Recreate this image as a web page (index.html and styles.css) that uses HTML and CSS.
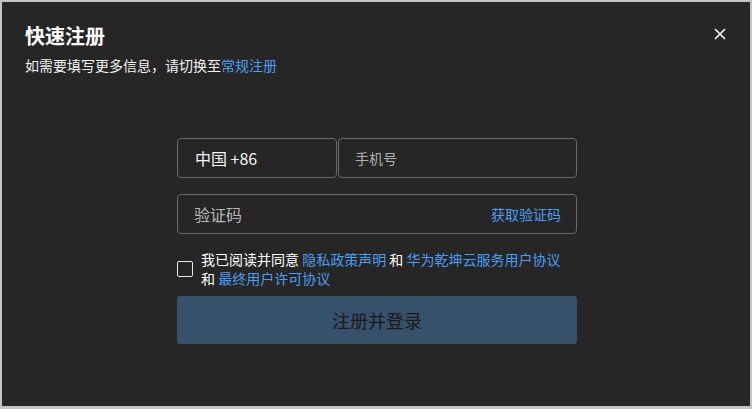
FILE: index.html
```html
<!DOCTYPE html>
<html lang="zh-CN">
<head>
    <meta charset="UTF-8">
    <meta name="viewport" content="width=device-width, initial-scale=1.0">
    <title>快速注册</title>
    <link rel="stylesheet" href="styles.css">
</head>
<body>
<div class="dialog">
    <div class="head">
        <div class="title">快速注册</div>
        <div class="sub">如需要填写更多信息，请切换至<a class="link">常规注册</a></div>
        <span class="close">
            <svg width="12" height="12" viewBox="0 0 12 12"><path d="M1 1L11 11M11 1L1 11" stroke="#fff" stroke-width="1.6" fill="none"/></svg>
        </span>
    </div>

    <div class="form">
        <div class="row">
            <div class="box country">中国 +86</div>
            <div class="box phone">手机号</div>
        </div>
        <div class="box code">
            <span class="hint">验证码</span>
            <a class="link getcode">获取验证码</a>
        </div>
        <div class="agree">
            <span class="check"></span>
            <p>我已阅读并同意 <a class="link">隐私政策声明</a> 和 <a class="link">华为乾坤云服务用户协议</a><br>和 <a class="link">最终用户许可协议</a></p>
        </div>
        <div class="btn">注册并登录</div>
    </div>
</div>
</body>
</html>
```

FILE: styles.css
```css
* {
    margin: 0;
    padding: 0;
    box-sizing: border-box;
}
body {
    width: 752px;
    height: 409px;
    background: #c3c3c3;
    padding: 2px 2px 3px 2px;
    font-family: "Noto Sans CJK SC", "Noto Sans", sans-serif;
}
.dialog {
    height: 100%;
    background: #262626;
    color: #fff;
    padding-left: 2px;
}
.head {
    position: relative;
    padding: 20px 23px 0 21px;
}
.title {
    font-size: 20px;
    font-weight: bold;
    line-height: 28px;
}
.sub {
    margin-top: 5px;
    font-size: 14px;
    line-height: 20px;
    color: #f2f2f2;
}
.link {
    color: #4d9cf0;
}
.close {
    position: absolute;
    right: 24px;
    top: 26px;
    display: flex;
}
.form {
    width: 400px;
    margin: 63px auto 0;
    display: flex;
    flex-direction: column;
}
.row {
    display: flex;
    gap: 1px;
}
.box {
    height: 40px;
    border: 1px solid #6a6a6a;
    border-radius: 4px;
    display: flex;
    align-items: center;
}
.country {
    width: 160px;
    padding-left: 17px;
    font-size: 16px;
    color: #f5f5f5;
}
.phone {
    flex: 1;
    padding-left: 16px;
    font-size: 14px;
    color: #b0b0b0;
}
.code {
    margin-top: 16px;
    justify-content: space-between;
    padding: 0 15px 0 16px;
}
.hint {
    font-size: 16px;
    color: #b8b8b8;
}
.getcode {
    font-size: 14px;
}
.agree {
    margin-top: 16px;
    display: flex;
    align-items: center;
    gap: 8px;
    font-size: 14px;
    line-height: 19px;
}
.check {
    width: 16px;
    height: 16px;
    border: 1.5px solid #e8e8e8;
    border-radius: 2px;
    flex-shrink: 0;
}
.btn {
    margin-top: 8px;
    height: 48px;
    background: #37506b;
    border-radius: 3px;
    color: #1a1a1a;
    font-size: 18px;
    display: flex;
    align-items: center;
    justify-content: center;
}
```
